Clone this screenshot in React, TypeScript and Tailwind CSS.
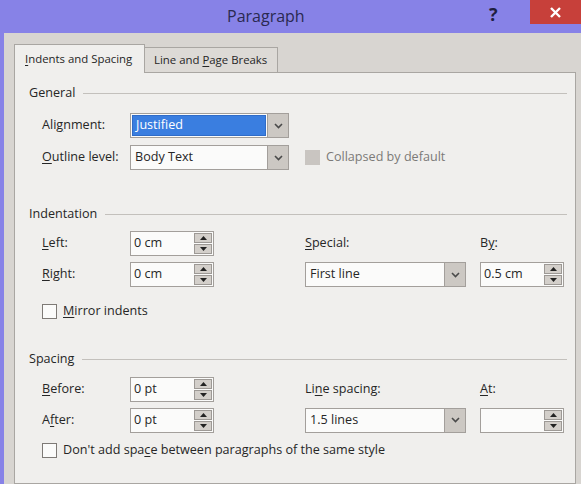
const FONT = "font-['Open_Sans','Noto_Sans',sans-serif]";

function Chevron() {
  return (
    <svg width="9" height="6" viewBox="0 0 9 6">
      <path d="M1 1 L4.5 4.5 L8 1" fill="none" stroke="#4a4a4a" strokeWidth="1.6" />
    </svg>
  );
}

function Select({ value, width, highlight }: { value: string; width: string; highlight?: boolean }) {
  return (
    <div className={`${width} h-[25px] flex border border-[#a39f9b] bg-[#fbfbfa]`}>
      <div className="flex-1 flex items-center p-[1px]">
        {highlight ? (
          <div className="h-full w-full bg-[#3a7ee0] text-white flex items-center pl-[3px] border border-[#2f6cc8]">
            {value}
          </div>
        ) : (
          <span className="pl-[3px]">{value}</span>
        )}
      </div>
      <div className="w-[21px] border-l border-[#a39f9b] bg-[#ccc8c3] flex items-center justify-center">
        <Chevron />
      </div>
    </div>
  );
}

function Spin({ value }: { value: string }) {
  return (
    <div className="w-[84px] h-[25px] flex border border-[#a39f9b] bg-[#fbfbfa]">
      <div className="flex-1 flex items-center pl-[3px]">{value}</div>
      <div className="w-[20px] flex flex-col gap-[1px] p-[1px]">
        <div className="flex-1 bg-[#d3cfca] border border-[#9d9995] flex items-center justify-center">
          <svg width="7" height="4" viewBox="0 0 7 4">
            <path d="M0 4 L3.5 0 L7 4 Z" fill="#222" />
          </svg>
        </div>
        <div className="flex-1 bg-[#d3cfca] border border-[#9d9995] flex items-center justify-center">
          <svg width="7" height="4" viewBox="0 0 7 4">
            <path d="M0 0 L3.5 4 L7 0 Z" fill="#222" />
          </svg>
        </div>
      </div>
    </div>
  );
}

function Check({ disabled }: { disabled?: boolean }) {
  return (
    <div
      className={`w-[15px] h-[15px] border ${
        disabled ? "bg-[#c9c5c1] border-[#c9c5c1]" : "bg-[#fbfbfa] border-[#7e7a76]"
      }`}
    />
  );
}

function Heading({ children }: { children: React.ReactNode }) {
  return (
    <div className="flex items-center gap-[8px] h-[16px]">
      <span>{children}</span>
      <div className="flex-1 h-px bg-[#c3c0bc] mr-[8px]" />
    </div>
  );
}

function U({ children }: { children: React.ReactNode }) {
  return <span className="underline underline-offset-2">{children}</span>;
}

export default function App() {
  return (
    <div className={`w-[581px] h-[484px] bg-[#8782e7] flex flex-col overflow-hidden ${FONT} text-[12.6px] text-[#262626]`}>
      {/* title bar */}
      <div className="h-[33px] flex shrink-0 relative">
        <div className="flex-1 flex items-center pl-[227px] pb-[2px] text-[16px] text-[#2a2950]">
          Paragraph
        </div>
        <div className="absolute left-[489px] top-[1px] text-[18px] font-bold text-[#1f1e3f]">?</div>
        <div className="absolute right-0 top-0 w-[51px] h-[24px] bg-[#c7403a] flex items-center justify-center">
          <svg width="11" height="11" viewBox="0 0 11 11">
            <path d="M1 1 L10 10 M10 1 L1 10" stroke="#fff" strokeWidth="2.4" />
          </svg>
        </div>
      </div>

      {/* frame */}
      <div className="flex-1 ml-[4px] bg-[#d8d5d1] pl-[10px] pr-[5px] pt-[11px] flex flex-col">
        {/* tabs */}
        <div className="flex items-end h-[29px] -mb-px relative z-10 text-[11.4px]">
          <div className="w-[131px] h-[29px] bg-[#f0efed] border border-b-0 border-[#a9a6a2] flex items-center pl-[10px]">
            <span>
              <U>I</U>ndents and Spacing
            </span>
          </div>
          <div className="w-[133px] h-[26px] bg-[#dddad6] border border-l-0 border-[#a9a6a2] flex items-center pl-[9px]">
            <span>
              Line and <U>P</U>age Breaks
            </span>
          </div>
        </div>

        {/* panel */}
        <div className="flex-1 bg-[#f0efed] border border-[#a9a6a2] pl-[14px] pt-[12px]">
          <Heading>General</Heading>
          <div className="pl-[13px] mt-[12px] flex flex-col gap-[7px]">
            <div className="flex items-center">
              <div className="w-[88px]">
                Ali<U>g</U>nment:
              </div>
              <Select value="Justified" width="w-[159px]" highlight />
            </div>
            <div className="flex items-center">
              <div className="w-[88px]">
                <U>O</U>utline level:
              </div>
              <Select value="Body Text" width="w-[159px]" />
              <div className="ml-[16px] flex items-center gap-[6px] text-[#7c7a78]">
                <Check disabled />
                <span>Collapsed by default</span>
              </div>
            </div>
          </div>

          <div className="mt-[36px]">
            <Heading>Indentation</Heading>
          </div>
          <div className="pl-[13px] mt-[9px] flex">
            <div className="w-[263px] flex flex-col gap-[6px]">
              <div className="flex items-center">
                <div className="w-[88px]">
                  <U>L</U>eft:
                </div>
                <Spin value="0 cm" />
              </div>
              <div className="flex items-center">
                <div className="w-[88px]">
                  <U>R</U>ight:
                </div>
                <Spin value="0 cm" />
              </div>
            </div>
            <div className="flex flex-col gap-[6px]">
              <div className="h-[25px] flex items-center">
                <span>
                  <U>S</U>pecial:
                </span>
              </div>
              <Select value="First line" width="w-[161px]" />
            </div>
            <div className="ml-[14px] flex flex-col gap-[6px]">
              <div className="h-[25px] flex items-center">
                <span>
                  B<U>y</U>:
                </span>
              </div>
              <Spin value="0.5 cm" />
            </div>
          </div>
          <div className="pl-[13px] mt-[15px] flex items-center gap-[6px]">
            <Check />
            <span>
              <U>M</U>irror indents
            </span>
          </div>

          <div className="mt-[31px]">
            <Heading>Spacing</Heading>
          </div>
          <div className="pl-[13px] mt-[9px] flex">
            <div className="w-[263px] flex flex-col gap-[6px]">
              <div className="flex items-center">
                <div className="w-[88px]">
                  <U>B</U>efore:
                </div>
                <Spin value="0 pt" />
              </div>
              <div className="flex items-center">
                <div className="w-[88px]">
                  A<U>f</U>ter:
                </div>
                <Spin value="0 pt" />
              </div>
            </div>
            <div className="flex flex-col gap-[6px]">
              <div className="h-[25px] flex items-center">
                <span>
                  Li<U>n</U>e spacing:
                </span>
              </div>
              <Select value="1.5 lines" width="w-[161px]" />
            </div>
            <div className="ml-[14px] flex flex-col gap-[6px]">
              <div className="h-[25px] flex items-center">
                <span>
                  <U>A</U>t:
                </span>
              </div>
              <Spin value="" />
            </div>
          </div>
          <div className="pl-[13px] mt-[8px] flex items-center gap-[6px]">
            <Check />
            <span>
              Don't add spa<U>c</U>e between paragraphs of the same style
            </span>
          </div>
        </div>
      </div>
    </div>
  );
}
